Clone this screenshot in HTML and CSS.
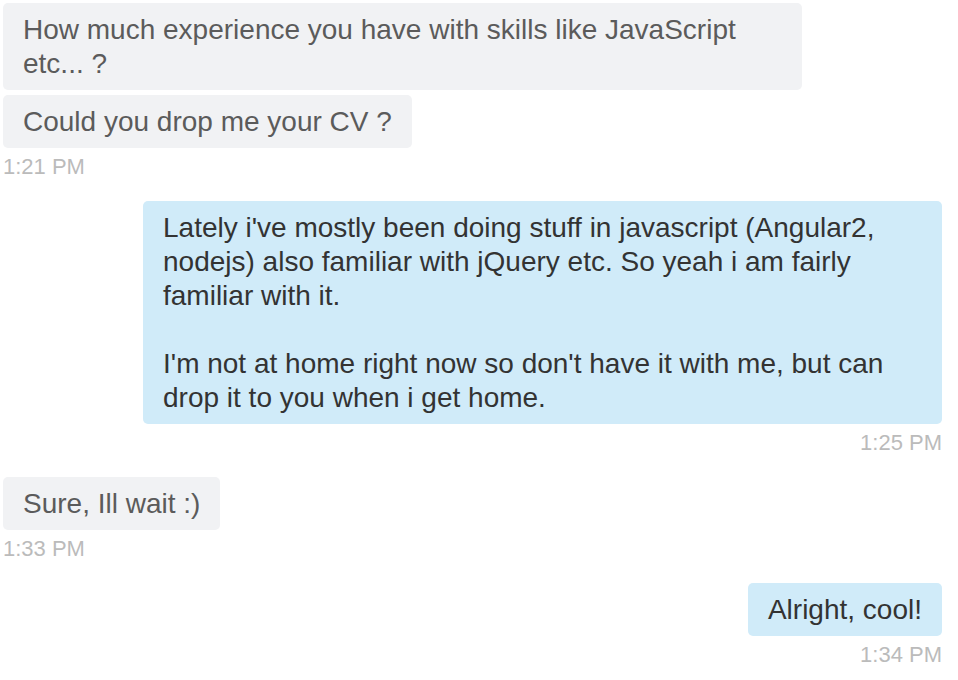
FILE: index.html
```html
<!DOCTYPE html>
<html>
<head>
<meta charset="utf-8">
<link rel="stylesheet" href="styles.css">
</head>
<body>
<div class="chat">
  <div class="group in">
    <div class="bubble">How much experience you have with skills like JavaScript etc... ?</div>
    <div class="bubble">Could you drop me your CV ?</div>
    <div class="time">1:21 PM</div>
  </div>
  <div class="group out">
    <div class="bubble">Lately i've mostly been doing stuff in javascript (Angular2, nodejs) also familiar with jQuery etc. So yeah i am fairly familiar with it.<br><br>I'm not at home right now so don't have it with me, but can drop it to you when i get home.</div>
    <div class="time">1:25 PM</div>
  </div>
  <div class="group in">
    <div class="bubble">Sure, Ill wait :)</div>
    <div class="time">1:33 PM</div>
  </div>
  <div class="group out">
    <div class="bubble">Alright, cool!</div>
    <div class="time">1:34 PM</div>
  </div>
</div>
</body>
</html>
```
FILE: styles.css
```css
html, body {
  margin: 0;
  padding: 0;
  background: #ffffff;
}
body {
  font-family: "Liberation Sans", Arial, sans-serif;
}
.chat {
  padding: 3px 16px 0 3px;
  display: flex;
  flex-direction: column;
  gap: 21px;
}
.group {
  display: flex;
  flex-direction: column;
  gap: 5px;
}
.group.in {
  align-items: flex-start;
}
.group.out {
  align-items: flex-end;
}
.bubble {
  max-width: 759px;
  padding: 9.5px 20px;
  font-size: 28px;
  line-height: 34px;
  border-radius: 5px;
}
.in .bubble {
  background: #f1f2f4;
  color: #5b5b5b;
}
.out .bubble {
  background: #d0ebf9;
  color: #333333;
}
.time {
  font-size: 22px;
  line-height: 26px;
  color: #bbbbbb;
  margin-top: 1px;
}
```
